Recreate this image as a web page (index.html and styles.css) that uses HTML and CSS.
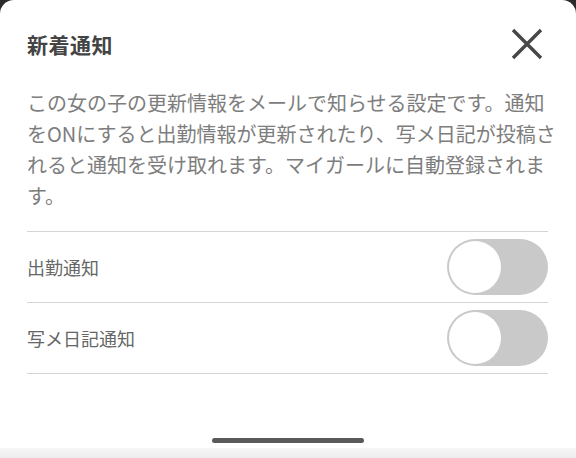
FILE: index.html
```html
<!DOCTYPE html>
<html lang="ja">
<head>
<meta charset="utf-8">
<link rel="stylesheet" href="styles.css">
</head>
<body>
<div class="sheet">
  <div class="header">
    <h1 class="title">新着通知</h1>
    <button class="close" aria-label="閉じる">
      <svg width="34" height="34" viewBox="0 0 34 34"><path d="M3 3 L31 31 M31 3 L3 31" stroke="#474747" stroke-width="3.4" fill="none"/></svg>
    </button>
  </div>
  <p class="desc">この女の子の更新情報をメールで知らせる設定です。通知をONにすると出勤情報が更新されたり、写メ日記が投稿されると通知を受け取れます。マイガールに自動登録されます。</p>
  <ul class="list">
    <li class="row"><span class="label">出勤通知</span><span class="toggle"><span class="knob"></span></span></li>
    <li class="row"><span class="label">写メ日記通知</span><span class="toggle"><span class="knob"></span></span></li>
  </ul>
  <div class="spacer"></div>
  <div class="home"><span class="bar"></span></div>
  <div class="bottom"></div>
</div>
</body>
</html>
```
FILE: styles.css
```css
html, body {
  margin: 0;
  padding: 0;
  background: #2a2a2a;
}
body {
  width: 576px;
  height: 458px;
  overflow: hidden;
  font-family: "Noto Sans CJK JP", "Noto Sans", sans-serif;
}
.sheet {
  background: #fff;
  height: 458px;
  border-radius: 14px 14px 0 0;
  display: flex;
  flex-direction: column;
  box-sizing: border-box;
}
.header {
  display: flex;
  align-items: center;
  justify-content: space-between;
  padding: 26px 32px 0 27px;
  height: 36px;
}
.title {
  margin: 0;
  font-size: 21px;
  font-weight: 700;
  color: #444;
  letter-spacing: 0.5px;
}
.close {
  border: 0;
  background: none;
  padding: 0;
  width: 34px;
  height: 34px;
}
.desc {
  margin: 25px 20px 0 27px;
  font-size: 20px;
  line-height: 31px;
  color: #7d7d7d;
}
.list {
  list-style: none;
  margin: 20px 28px 0 27px;
  padding: 0;
  border-top: 1px solid #d4d4d4;
}
.row {
  display: flex;
  align-items: center;
  justify-content: space-between;
  height: 70px;
  border-bottom: 1px solid #d4d4d4;
}
.label {
  font-size: 18px;
  color: #666;
}
.toggle {
  width: 101px;
  height: 56px;
  border-radius: 28px;
  background: #c9c9c9;
  display: flex;
  align-items: center;
  padding: 0 2px;
  box-sizing: border-box;
}
.knob {
  width: 52px;
  height: 52px;
  border-radius: 50%;
  background: #fff;
}
.spacer {
  flex: 1;
}
.home {
  display: flex;
  justify-content: center;
  padding-bottom: 5px;
}
.bar {
  width: 152px;
  height: 5px;
  border-radius: 3px;
  background: #5a5a5a;
}
.bottom {
  height: 10px;
  background: linear-gradient(#f7f7f7, #ececec);
}
```
